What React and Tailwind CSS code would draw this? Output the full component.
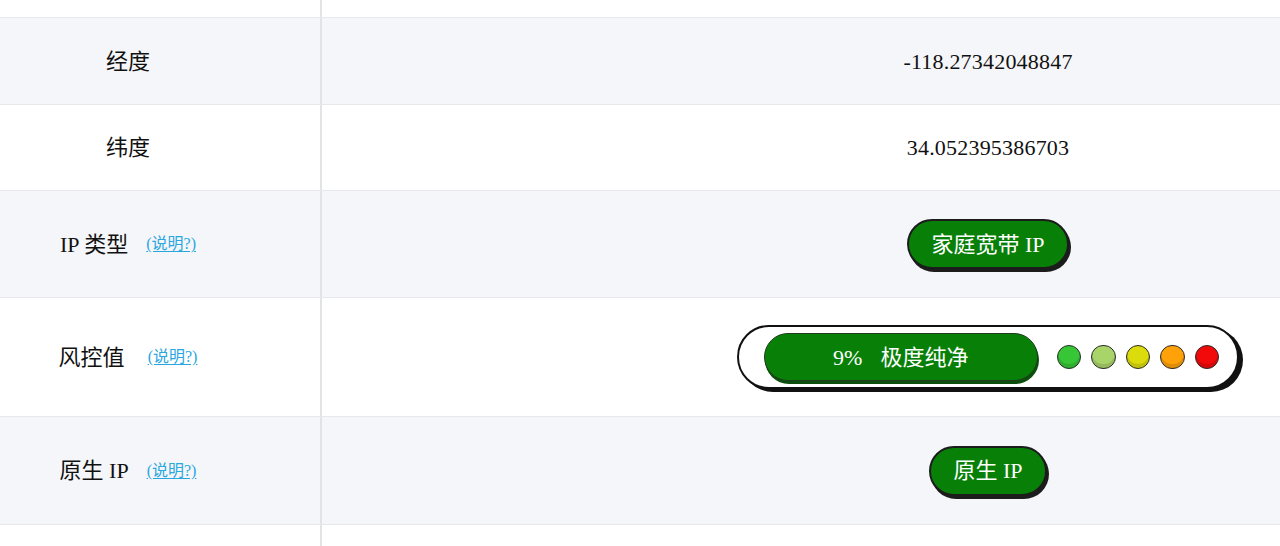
import React from "react";

const FONT = "font-['Liberation_Serif','Noto_Sans_CJK_SC',serif]";

function Hint() {
  return (
    <a
      href="#"
      className="ml-[18px] text-[16px] text-[#2aa7df] underline underline-offset-2"
    >
      (说明?)
    </a>
  );
}

function Row({ bg, h, label, children }) {
  return (
    <div className={`flex ${h} ${bg} border-b border-[#e7e8eb]`}>
      <div className="w-[322px] shrink-0 flex items-center justify-center pr-[64px] border-r-2 border-[#e2e3e7]">
        {label}
      </div>
      <div className="flex-1 flex items-center justify-center pl-[374px]">
        {children}
      </div>
    </div>
  );
}

function Pill({ children }) {
  return (
    <span className="inline-flex items-center h-[50px] px-[22px] rounded-full bg-[#088008] border-2 border-[#1c1c1c] shadow-[2px_3px_0_#1c1c1c] text-white text-[22px]">
      {children}
    </span>
  );
}

const dots = ["#36c636", "#a9d46a", "#dcdc0c", "#ffa20a", "#f20a0a"];

export default function App() {
  return (
    <div className={`w-[1280px] h-[546px] overflow-hidden bg-white text-[#111] text-[22px] ${FONT}`}>
      <Row bg="bg-white" h="h-[18px]" label={null} />

      <Row bg="bg-[#f5f6f9]" h="h-[87px]" label={<span>经度</span>}>
        <span className="tracking-[0.2px]">-118.27342048847</span>
      </Row>

      <Row bg="bg-white" h="h-[86px]" label={<span>纬度</span>}>
        <span className="tracking-[0.2px]">34.052395386703</span>
      </Row>

      <Row
        bg="bg-[#f5f6f9]"
        h="h-[107px]"
        label={
          <span className="flex items-center">
            IP 类型
            <Hint />
          </span>
        }
      >
        <Pill>家庭宽带 IP</Pill>
      </Row>

      <Row
        bg="bg-white"
        h="h-[119px]"
        label={
          <span className="flex items-center">
            风控值
            <span className="ml-[5px]" />
            <Hint />
          </span>
        }
      >
        <div className="flex items-center h-[64px] pl-[25px] pr-[18px] rounded-full bg-white border-2 border-[#111] shadow-[4px_3px_0_#111]">
          <div className="flex items-center justify-center gap-[18px] w-[274px] h-[48px] rounded-full bg-[#088008] border-[1.5px] border-[#1e3b1e] shadow-[1px_3px_0_#0c4f0c] text-white text-[22px]">
            <span>9%</span>
            <span>极度纯净</span>
          </div>
          <div className="flex items-center gap-[10px] ml-[19px]">
            {dots.map((c) => (
              <span
                key={c}
                className="w-[24.5px] h-[24.5px] rounded-full border-[1.5px] border-[#2b2b2b] shadow-[inset_0_-4px_0_rgba(0,0,0,0.12)]"
                style={{ backgroundColor: c }}
              />
            ))}
          </div>
        </div>
      </Row>

      <Row
        bg="bg-[#f5f6f9]"
        h="h-[108px]"
        label={
          <span className="flex items-center">
            原生 IP
            <Hint />
          </span>
        }
      >
        <Pill>原生 IP</Pill>
      </Row>

      <Row bg="bg-white" h="h-[60px]" label={null} />
    </div>
  );
}
